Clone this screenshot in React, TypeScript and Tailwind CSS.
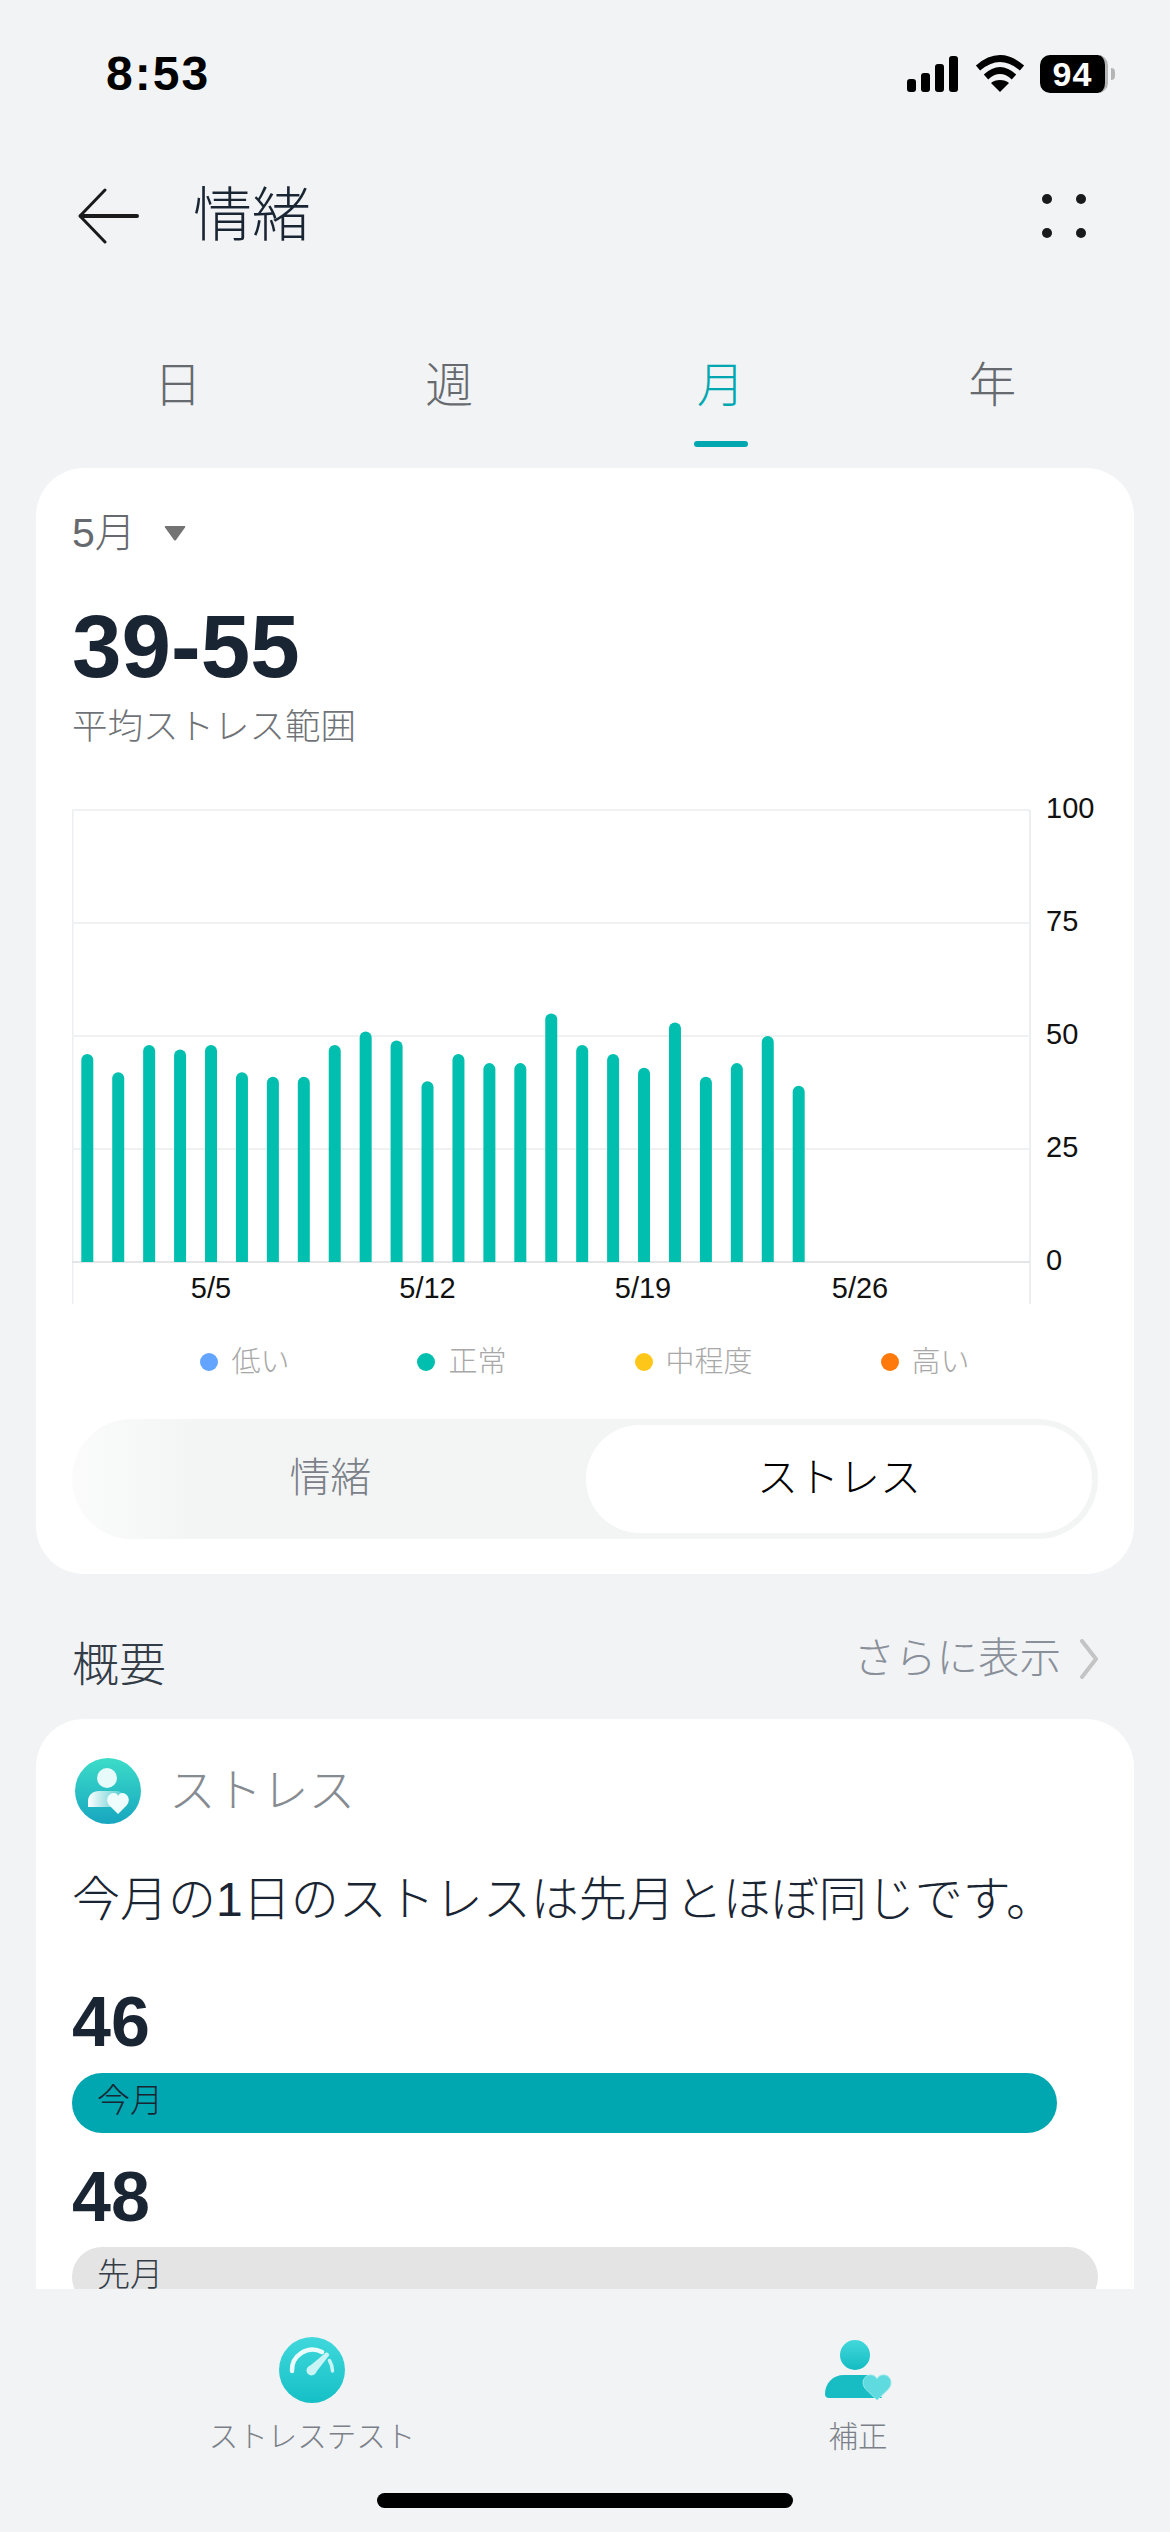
const FONT = "font-['Liberation_Sans','Noto_Sans_CJK_JP',sans-serif]";

const STRESS_VALUES = [46, 42, 48, 47, 48, 42, 41, 41, 48, 51, 49, 40, 46, 44, 44, 55, 48, 46, 43, 53, 41, 44, 50, 39];
const Y_TICKS = [100, 75, 50, 25, 0];
const X_TICKS = [
  { label: "5/5", x: 139 },
  { label: "5/12", x: 355.5 },
  { label: "5/19", x: 571 },
  { label: "5/26", x: 788 },
];
const LEGEND = [
  { label: "低い", dot: "bg-[#63a4ff]" },
  { label: "正常", dot: "bg-[#00bfae]" },
  { label: "中程度", dot: "bg-[#ffc61a]" },
  { label: "高い", dot: "bg-[#ff7a0a]" },
];
const TABS = ["日", "週", "月", "年"];

function StatusBar() {
  return (
    <div className="flex h-[148px] shrink-0 items-center justify-between pl-[106px] pr-[55px]">
      <span className="text-[48px] font-bold leading-none tracking-[2px] text-black">8:53</span>
      <div className="flex items-center">
        <svg width="52" height="38" viewBox="0 0 52 38" aria-hidden>
          <rect x="0" y="24" width="9" height="13" rx="3" />
          <rect x="14" y="18" width="9" height="19" rx="3" />
          <rect x="28" y="9" width="9" height="28" rx="3" />
          <rect x="42" y="1" width="9" height="36" rx="3" />
        </svg>
        <svg className="ml-[16px]" width="50" height="38" viewBox="0 0 50 38" aria-hidden>
          <path d="M3 13 Q25 -6 47 13" fill="none" stroke="#000" strokeWidth="6.5" />
          <path d="M11 22 Q25 9 39 22" fill="none" stroke="#000" strokeWidth="6.5" />
          <path d="M25 37 L16 28 C20 24 30 24 34 28 Z" />
        </svg>
        <div className="ml-[15px] flex h-[38px] w-[68px] items-center justify-center rounded-[10px] border-r-[3px] border-r-[#b5b5b5] bg-black text-[34px] font-bold tracking-[1px] text-white">
          94
        </div>
        <div className="ml-[3px] h-[12px] w-[4px] rounded-r-full bg-[#b5b5b5]" />
      </div>
    </div>
  );
}

function Header() {
  return (
    <div className="flex h-[136px] shrink-0 items-center pl-[78px] pr-[84px]">
      <svg width="62" height="56" viewBox="0 0 62 56" fill="none" stroke="#1a1a1a" aria-hidden>
        <path d="M27 2 L2 28 L27 54" strokeWidth="3" strokeLinecap="round" strokeLinejoin="round" />
        <path d="M3 28 H59" strokeWidth="4" strokeLinecap="round" />
      </svg>
      <h1 className="ml-[53px] text-[59px] font-light leading-none text-[#1a2533]">情緒</h1>
      <div className="ml-auto grid grid-cols-2 gap-x-[24px] gap-y-[24px]">
        <span className="size-[10px] rounded-full bg-[#1a1a1a]" />
        <span className="size-[10px] rounded-full bg-[#1a1a1a]" />
        <span className="size-[10px] rounded-full bg-[#1a1a1a]" />
        <span className="size-[10px] rounded-full bg-[#1a1a1a]" />
      </div>
    </div>
  );
}

function Tabs() {
  return (
    <div className="grid h-[184px] shrink-0 grid-cols-4 px-[42px]">
      {TABS.map((tab) => (
        <div key={tab} className="flex flex-col items-center pt-[72px]">
          <span className={`text-[48px] font-light leading-[60px] ${tab === "月" ? "text-[#00a7b0]" : "text-[#666a6e]"}`}>
            {tab}
          </span>
          {tab === "月" && <span className="mt-[25px] h-[6px] w-[54px] rounded-full bg-[#00a7b0]" />}
        </div>
      ))}
    </div>
  );
}

function StressChart() {
  const y = (v: number) => 472 - v * 4.52;
  return (
    <svg className="mt-[38px] block" width="1030" height="520" viewBox="0 0 1030 520" aria-label="平均ストレス範囲">
      <path d="M0.5 20 V514 M958 20 V514" stroke="#eceeef" strokeWidth="2" fill="none" />
      {[100, 75, 50, 25].map((v) => (
        <line key={v} x1="0" x2="958" y1={y(v)} y2={y(v)} stroke="#f0f1f2" strokeWidth="2" />
      ))}
      <line x1="0" x2="958" y1="472" y2="472" stroke="#e3e5e6" strokeWidth="2" />
      {STRESS_VALUES.map((v, i) => {
        const cx = 15.3 + i * 30.93;
        return (
          <path
            key={i}
            d={`M${cx - 6} 472 V${y(v) + 6} A6 6 0 0 1 ${cx + 6} ${y(v) + 6} V472 Z`}
            fill="#00bfae"
          />
        );
      })}
      {Y_TICKS.map((v) => (
        <text key={v} x="974" y={y(v) + 8} fontSize="29" fill="#111" fontFamily="Liberation Sans">
          {v}
        </text>
      ))}
      {X_TICKS.map((t) => (
        <text key={t.label} x={t.x} y="508" fontSize="29" fill="#111" textAnchor="middle" fontFamily="Liberation Sans">
          {t.label}
        </text>
      ))}
    </svg>
  );
}

function RangeCard() {
  return (
    <section className="mx-[36px] rounded-[48px] bg-white px-[36px] pb-[35px] pt-[39px]">
      <div className="flex h-[50px] items-center pt-[2px]">
        <span className="text-[41px] font-light leading-none text-[#666a6e]">5月</span>
        <svg className="ml-[28px]" width="22" height="16" viewBox="0 0 22 16" aria-hidden>
          <path d="M1.5 1 H20.5 Q22 1 21 2.5 L12 15 Q11 16 10 15 L1 2.5 Q0 1 1.5 1 Z" fill="#737373" />
        </svg>
      </div>
      <div className="mt-[39px] text-[89px] font-bold leading-[100px] text-[#1a2533]">39-55</div>
      <div className="mt-[6px] text-[35.500px] font-light leading-[50px] text-[#6f7377]">平均ストレス範囲</div>
      <StressChart />
      <div className="mt-[32px] flex h-[40px] items-center justify-center gap-[128px]">
        {LEGEND.map((item) => (
          <div key={item.label} className="flex items-center gap-[13px]">
            <span className={`size-[18px] rounded-full ${item.dot}`} />
            <span className="text-[29px] font-light leading-none text-[#a8a8a8]">{item.label}</span>
          </div>
        ))}
      </div>
      <div className="mt-[37px] flex h-[120px] items-center rounded-full bg-linear-to-r from-[#fbfbfb] to-[#f3f5f5] to-[12%] pl-[7px] pr-[6px]">
        <div className="flex-1 pr-[4px] text-center text-[41px] font-light text-[#7b8088]">情緒</div>
        <div className="flex h-[108px] w-[506px] items-center justify-center rounded-full bg-white text-[41px] font-light text-black">
          ストレス
        </div>
      </div>
    </section>
  );
}

function SectionHeading() {
  return (
    <div className="flex h-[145px] items-start justify-between pl-[72px] pr-[71px] pt-[53px]">
      <h2 className="pt-[8px] text-[47px] font-light leading-[60px] text-[#333c47]">概要</h2>
      <div className="flex h-[60px] items-center pt-[3px]">
        <span className="text-[41.500px] font-light leading-none text-[#8a9099]">さらに表示</span>
        <svg className="ml-[18px]" width="20" height="40" viewBox="0 0 20 40" fill="none" aria-hidden>
          <path d="M3 2 L17 20 L3 38" stroke="#c4c4c4" strokeWidth="4" strokeLinecap="round" strokeLinejoin="round" />
        </svg>
      </div>
    </div>
  );
}

function StressBadge() {
  return (
    <svg className="ml-[3px]" width="66" height="66" viewBox="0 0 66 66" aria-hidden>
      <defs>
        <linearGradient id="badgeBg" x1="0" y1="0" x2="0" y2="1">
          <stop offset="0" stopColor="#3cdcc8" />
          <stop offset="1" stopColor="#17a6c0" />
        </linearGradient>
        <linearGradient id="badgeBody" x1="0" y1="0" x2="1" y2="0">
          <stop offset="0" stopColor="#ffffff" />
          <stop offset="1" stopColor="#ffffff" stopOpacity="0.2" />
        </linearGradient>
      </defs>
      <circle cx="33" cy="33" r="33" fill="url(#badgeBg)" />
      <circle cx="32" cy="20" r="10" fill="#e8fbfb" />
      <path d="M13 49 V43 C13 37 18 33 24 33 H42 C46 33 48 36 48 40 V49 Z" fill="url(#badgeBody)" />
      <path
        d="M43 56 L34 47 C30 42 33 35 39 35 C41 35 42.500 36 43 38 C44 36 45.500 35 47 35 C53 35 56 42 52 47 Z"
        fill="#f0fdfd"
      />
    </svg>
  );
}

function CompareBar({ value, label, className }: { value: number; label: string; className: string }) {
  return (
    <>
      <div className="text-[70px] font-bold leading-[70px] text-[#1a2533]">{value}</div>
      <div className={`flex h-[60px] shrink-0 items-center rounded-full pb-[5px] pl-[25px] text-[33px] font-light ${className}`}>
        {label}
      </div>
    </>
  );
}

function SummaryCard() {
  return (
    <section className="mx-[36px] rounded-t-[48px] bg-white px-[36px] pb-[40px] pt-[39px]">
      <div className="flex h-[66px] items-center">
        <StressBadge />
        <span className="ml-[28px] pt-[2px] text-[46.500px] font-light text-[#868b92]">ストレス</span>
      </div>
      <p className="mt-[46px] text-[48px] font-light leading-[60px] text-[#1a2533]">
        今月の1日のストレスは先月とほぼ同じです。
      </p>
      <div className="mt-[57px] flex flex-col">
        <CompareBar value={46} label="今月" className="mt-[16px] w-[985px] bg-[#00a7b0] text-[#1a2533]" />
        <div className="h-[29px]" />
        <CompareBar value={48} label="先月" className="mt-[15px] w-full bg-[#e4e4e4] text-[#333c47]" />
      </div>
    </section>
  );
}

function GaugeIcon() {
  return (
    <svg width="66" height="66" viewBox="0 0 66 66" aria-hidden>
      <defs>
        <linearGradient id="gaugeBg" x1="0" y1="0" x2="0" y2="1">
          <stop offset="0" stopColor="#40d8dc" />
          <stop offset="1" stopColor="#14c0c6" />
        </linearGradient>
      </defs>
      <circle cx="33" cy="33" r="33" fill="url(#gaugeBg)" />
      <path d="M13 34 A20.500 20.500 0 0 1 43 15" fill="none" stroke="#eafcfc" strokeWidth="4.500" strokeLinecap="round" />
      <path d="M50.500 23.500 A20.500 20.500 0 0 1 53.500 34" fill="none" stroke="#c8f4f5" strokeWidth="3.500" strokeLinecap="round" />
      <path d="M29.500 30 L47 15.500 Q50 15 50 18.500 L36 36.500 Z" fill="#c8f4f5" />
      <circle cx="32.500" cy="33.500" r="5" fill="#c8f4f5" />
    </svg>
  );
}

function PersonHeartIcon() {
  return (
    <svg width="76" height="66" viewBox="0 0 76 66" aria-hidden>
      <defs>
        <linearGradient id="personFill" x1="0" y1="0" x2="0" y2="1">
          <stop offset="0" stopColor="#42d8dc" />
          <stop offset="1" stopColor="#14bcc2" />
        </linearGradient>
      </defs>
      <circle cx="35" cy="18" r="15" fill="url(#personFill)" />
      <path d="M5 57 C5 46 13 38 24 38 H50 L62 61 H9 C6.500 61 5 59.500 5 57 Z" fill="#17bdc3" />
      <path
        d="M57 63 L46 52.500 C40 46 44 38 50.500 38 C53 38 55.500 39 57 42 C58.500 39 61 38 63.500 38 C70 38 74 46 68 52.500 Z"
        fill="#5fdbe0"
        stroke="#8fe8ea"
        strokeWidth="1"
      />
    </svg>
  );
}

function BottomNav() {
  return (
    <nav className="flex h-[243px] shrink-0 flex-col bg-[#f1f3f5] pt-[48px]">
      <div className="grid grid-cols-2 px-[39px]">
        <div className="flex flex-col items-center">
          <GaugeIcon />
          <span className="mt-[14px] text-[29.500px] font-light leading-[40px] text-[#7b8088]">ストレステスト</span>
        </div>
        <div className="flex flex-col items-center">
          <PersonHeartIcon />
          <span className="mt-[14px] text-[29.500px] font-light leading-[40px] text-[#7b8088]">補正</span>
        </div>
      </div>
      <div className="mx-auto mt-[36px] h-[15px] w-[416px] rounded-full bg-black" />
    </nav>
  );
}

export default function App() {
  return (
    <div className={`flex h-[2532px] w-[1170px] flex-col overflow-hidden bg-[#f1f3f5] ${FONT}`}>
      <StatusBar />
      <Header />
      <Tabs />
      <main className="min-h-0 flex-1 overflow-hidden">
        <RangeCard />
        <SectionHeading />
        <SummaryCard />
      </main>
      <BottomNav />
    </div>
  );
}
